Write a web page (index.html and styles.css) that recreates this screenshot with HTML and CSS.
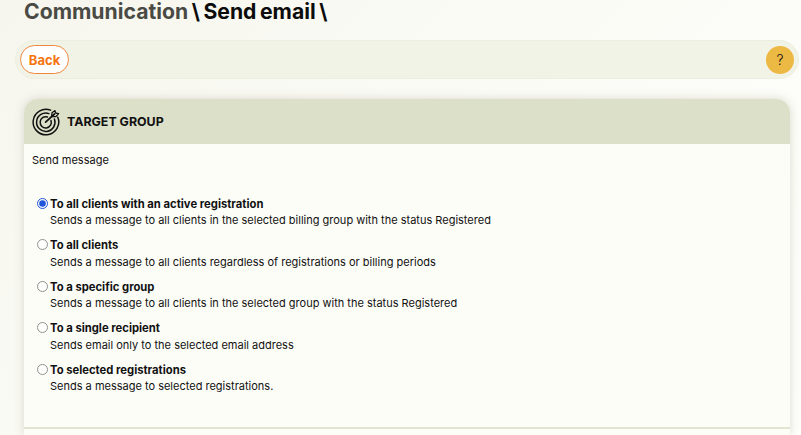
FILE: index.html
```html
<!DOCTYPE html>
<html lang="en">
<head>
<meta charset="utf-8">
<title>Send email</title>
<link rel="stylesheet" href="styles.css">
</head>
<body>
<h1 class="crumbs"><span class="crumb-parent">Communication</span> \ Send email \</h1>
<div class="toolbar">
  <button class="back" type="button">Back</button>
  <span class="help">?</span>
</div>
<section class="card">
  <header class="card-head">
    <svg class="target" viewBox="0 0 28 28" width="28" height="28" fill="none" stroke="#111" stroke-width="1.5" stroke-linecap="round" stroke-linejoin="round">
      <path d="M18.6 2.1A12.8 12.8 0 1 0 25.8 9.2"/>
      <path d="M16.9 5.6A9.2 9.2 0 1 0 22.4 11"/>
      <path d="M15.4 9A5.6 5.6 0 1 0 19 12.4"/>
      <path d="M13.6 14.2L22.5 6" stroke-width="1.7"/>
      <path d="M19.6 8.6L20 4.8L23 2.6L23.6 5L26.6 5.6L24 8.6Z" stroke-width="1.3"/>
    </svg>
    <h2 class="card-title">TARGET GROUP</h2>
  </header>
  <div class="card-body">
    <p class="lead">Send message</p>
    <div class="options">
      <label class="option">
        <input type="radio" name="target" checked>
        <span class="option-title">To all clients with an active registration</span>
        <span class="option-desc">Sends a message to all clients in the selected billing group with the status Registered</span>
      </label>
      <label class="option">
        <input type="radio" name="target">
        <span class="option-title">To all clients</span>
        <span class="option-desc">Sends a message to all clients regardless of registrations or billing periods</span>
      </label>
      <label class="option">
        <input type="radio" name="target">
        <span class="option-title">To a specific group</span>
        <span class="option-desc">Sends a message to all clients in the selected group with the status Registered</span>
      </label>
      <label class="option">
        <input type="radio" name="target">
        <span class="option-title">To a single recipient</span>
        <span class="option-desc">Sends email only to the selected email address</span>
      </label>
      <label class="option">
        <input type="radio" name="target">
        <span class="option-title">To selected registrations</span>
        <span class="option-desc">Sends a message to selected registrations.</span>
      </label>
    </div>
  </div>
  <div class="card-foot"></div>
</section>
</body>
</html>
```
FILE: styles.css
```css
* { box-sizing: border-box; }
html, body { height: 100%; }
body {
  margin: 0;
  overflow: hidden;
  font-family: "Inter", "Liberation Sans", sans-serif;
  color: #111;
  background: linear-gradient(135deg, #f6f6ee 0%, #fbfbf6 45%, #fefefb 100%);
}
.crumbs {
  margin: 0;
  height: 40px;
  padding: 0 0 0 24px;
  font-size: 21.2px;
  line-height: 22px;
  font-weight: 700;
  word-spacing: -1.5px;
  color: #0c0c0c;
}
.crumb-parent { color: #4a4a45; }
.toolbar {
  display: flex;
  align-items: center;
  justify-content: space-between;
  width: 784px;
  height: 39px;
  margin: 0 0 0 15px;
  padding: 0 4px;
  background: #f1f3e7;
  border: 1px solid #ecefe0;
  border-radius: 20px;
}
.back {
  width: 49px;
  height: 29px;
  padding: 0;
  font: 700 13px "Inter", sans-serif;
  color: #f57410;
  background: #fff;
  border: 1px solid #f0883c;
  border-radius: 15px;
}
.help {
  display: flex;
  align-items: center;
  justify-content: center;
  width: 28px;
  height: 28px;
  font-size: 14px;
  font-weight: 300;
  border-radius: 50%;
  background: #edb945;
}
.card {
  width: 766px;
  margin: 20px 0 0 24px;
  border-radius: 14px 14px 0 0;
  background: #fdfdf8;
  box-shadow: 0 0 10px rgba(120, 120, 90, 0.25);
}
.card-head {
  display: flex;
  align-items: center;
  gap: 7px;
  height: 45px;
  padding-left: 8px;
  background: #dce0c9;
  border-radius: 14px 14px 0 0;
}
.target { flex: none; }
.card-title {
  margin: 0;
  font-size: 12.4px;
  font-weight: 700;
}
.card-body { padding: 9px 8px 0 8px; height: 283px; }
.lead {
  margin: 0;
  font-size: 11px;
  line-height: 14px;
  height: 43.5px;
}
.options { display: flex; flex-direction: column; gap: 9.6px; }
.option {
  display: grid;
  grid-template-columns: 11px 1fr;
  column-gap: 2px;
  row-gap: 1px;
  padding-left: 5px;
  font-size: 11px;
  line-height: 15.5px;
}
.option input {
  width: 11px;
  height: 11px;
  margin: 1px 0 0;
  accent-color: #1f55d8;
}
.option input:not(:checked) { opacity: 0.8; }
.option-title { font-weight: 700; font-size: 11.25px; }
.option-desc { grid-column: 2; }
.card-foot { height: 8px; border-top: 2px solid #e2e5d2; }
```
